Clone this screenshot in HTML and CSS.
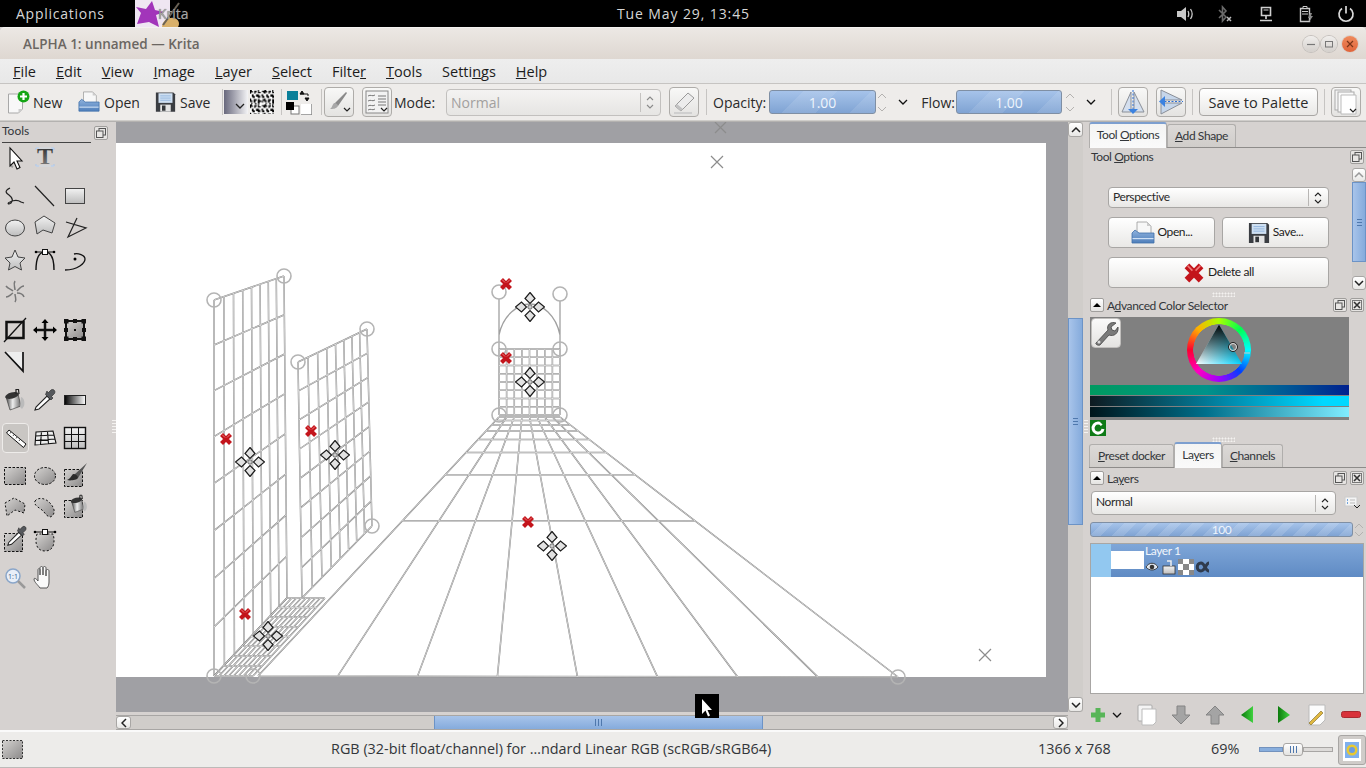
FILE: index.html
```html
<!DOCTYPE html>
<html lang="en">
<head>
    <meta charset="UTF-8">
    <title>ALPHA 1: unnamed — Krita</title>
    <link rel="stylesheet" href="styles.css">
</head>
<body>
    <!-- shared gradients and icons -->
    <svg class="defs" xmlns="http://www.w3.org/2000/svg">
        <defs>
            <linearGradient id="g-shape" x1="0" y1="0" x2="0" y2="1"><stop offset="0" stop-color="#f2f2f2"/><stop offset="1" stop-color="#bdbdbd"/></linearGradient>
            <linearGradient id="g-select" x1="0" y1="0" x2="1" y2="1"><stop offset="0" stop-color="#d4d2d0"/><stop offset="1" stop-color="#8c8a8a"/></linearGradient>
            <linearGradient id="g-black" x1="0" y1="0" x2="1" y2="0"><stop offset="0" stop-color="#000"/><stop offset="1" stop-color="#fff"/></linearGradient>
            <linearGradient id="g-metal" x1="0" y1="0" x2="1" y2="0"><stop offset="0" stop-color="#444"/><stop offset=".45" stop-color="#eee"/><stop offset="1" stop-color="#666"/></linearGradient>
            <linearGradient id="g-blue" x1="0" y1="0" x2="0" y2="1"><stop offset="0" stop-color="#8fb2dd"/><stop offset="1" stop-color="#4f7fbb"/></linearGradient>
            <linearGradient id="g-green" x1="0" y1="0" x2="1" y2="0"><stop offset="0" stop-color="#0c7a0c"/><stop offset="1" stop-color="#3fd23f"/></linearGradient>
            <linearGradient id="g-t" x1="0" y1="0" x2="0" y2="1"><stop offset="0" stop-color="#222"/><stop offset="1" stop-color="#888"/></linearGradient>
            <linearGradient id="g-tri-a" x1="0" y1="1" x2="1" y2="1"><stop offset="0" stop-color="#fff"/><stop offset="1" stop-color="#00d4ff"/></linearGradient>
            <linearGradient id="g-tri-b" x1="0" y1="0" x2="0" y2="1"><stop offset="0" stop-color="#000"/><stop offset="1" stop-color="#000" stop-opacity="0"/></linearGradient>
            <pattern id="p-noise" width="24" height="24" patternUnits="userSpaceOnUse" patternTransform="scale(.6)">
                <rect width="24" height="24" fill="#fff"/>
                <path d="M0 0h3v2h2v2H2v2H0zM7 1h4v3H9v2H7zM13 0h2v3h3v2h-5zM20 1h4v4h-2V3h-2zM3 7h3v3h2v3H4v-2H3zM10 7h5v2h2v4h-4v-2h-3zM19 7h3v3h2v3h-4v-3h-1zM0 14h2v3h2v3H0zM6 15h5v3H9v3H6zM13 15h3v2h3v3h-3v3h-3zM21 15h3v3h-2v3h-2v-3h1zM2 21h2v3H2zM8 22h3v2H8z" fill="#000"/>
            </pattern>
            <symbol id="i-open" viewBox="0 0 24 24">
                <path d="M6 1h10l4 4v9H6z" fill="#f7f7f7" stroke="#9a9a9a" stroke-width=".8"/>
                <path d="M16 1v4h4z" fill="#ccc"/>
                <path d="M1 12l3-3 4 3h15v10H1z" fill="url(#g-blue)" stroke="#3f6fa8" stroke-width=".8"/>
                <rect x="1.5" y="17" width="21" height="1.2" fill="#cfe0f5"/>
            </symbol>
            <symbol id="i-save" viewBox="0 0 24 24">
                <path d="M1 1h20l2 2v20H1z" fill="#3a3d42"/>
                <rect x="4" y="2" width="16" height="11" fill="#cfe0f2"/>
                <path d="M6 5h12M6 7.5h12M6 10h12" stroke="#8fb2dd"/>
                <rect x="6" y="15" width="12" height="8" fill="#e4e4e4"/>
                <rect x="8" y="16" width="4" height="6" fill="#33363a"/>
            </symbol>
            <symbol id="i-float" viewBox="0 0 14 14">
                <rect x="5" y="2.5" width="6.5" height="6.5" fill="none" stroke="#555"/>
                <rect x="2.5" y="5" width="6.5" height="6.5" fill="#e8e6e4" stroke="#555"/>
            </symbol>
            <symbol id="i-close" viewBox="0 0 14 14">
                <rect x="2.5" y="2.5" width="9" height="9" fill="#e8e6e4" stroke="#777"/>
                <path d="M4 4l6 6M10 4l-6 6" stroke="#333" stroke-width="1.6"/>
            </symbol>
            <symbol id="i-collapse" viewBox="0 0 14 14">
                <path d="M3 9l4-4 4 4z" fill="#000"/>
            </symbol>
            <symbol id="i-bucket" viewBox="0 0 24 24">
                <path d="M3 9l12-3 3 12-11 4z" fill="url(#g-metal)" stroke="#333" stroke-width=".6"/>
                <ellipse cx="9" cy="7.5" rx="7" ry="3" fill="#333" transform="rotate(-14 9 7.5)"/>
                <path d="M13 6V1.5h2.5L16 6" fill="none" stroke="#222" stroke-width="1.2"/>
                <path d="M18 9c3 1 4 5 3 9l-2 3-2-2z" fill="#bbb"/>
            </symbol>
            <symbol id="i-dropper" viewBox="0 0 24 24">
                <path d="M2 22l1-3L14 8l3 3L6 21z" fill="#fff" stroke="#222" stroke-width="1.1"/>
                <path d="M12.5 6.5l5.5 5.5 2-2-1.5-1.5 3-3c1.5-3-1.5-5-3.5-3.5l-3 3L14 3z" fill="#55585c" stroke="#222" stroke-width=".6"/>
            </symbol>
            <symbol id="i-brush" viewBox="0 0 24 24">
                <path d="M10 13L23 1l-9 15z" fill="#555"/>
                <path d="M9 12c3 0 5 2 5 4-1 2-8 3-11 2 3-1 4-4 6-6z" fill="#2b2b2b"/>
            </symbol>
            <symbol id="i-move" viewBox="-15 -15 30 30">
                <g fill="#e2e2e2" stroke="#1c1c1c" stroke-width="1.2">
                    <path d="M0-14.5l5 6L0-3.5l-5-5z"/>
                    <path d="M0 14.5l5-6L0 3.5l-5 5z"/>
                    <path d="M-14.5 0l6-5 5 5-5 5z"/>
                    <path d="M14.5 0l-6-5-5 5 5 5z"/>
                    <circle r="2.2" fill="#ccc" stroke="#555" stroke-width=".8"/>
                </g>
            </symbol>
            <symbol id="i-del" viewBox="-7 -7 14 14">
                <path d="M-4.5-4.5l9 9M4.5-4.5l-9 9" stroke="#c3141b" stroke-width="4.2"/>
                <path d="M-4-4.5l3 3M4-4.5l-3 3" stroke="#ef7a7a" stroke-width="1"/>
            </symbol>
        </defs>
    </svg>

    <div class="topbar">
        <span class="apps-label">Applications</span>
        <div class="task-item">
            <svg class="task-icon" viewBox="0 0 45 27" xmlns="http://www.w3.org/2000/svg">
                <rect width="35" height="27" fill="#efe6f2"/>
                <path d="M2 24l4-11-5-6 10 2L17 1l3 9 9 2-8 3 3 12-10-5z" fill="#a235ba"/>
                <path d="M27 27c0-6 6-10 12-9 5 1 6 6 4 9z" fill="#d9b06a"/>
                <path d="M28 25L44 3" stroke="#6a6256" stroke-width="2"/>
            </svg>
            <span class="task-label">Krita</span>
        </div>
        <span class="clock">Tue May 29, 13:45</span>
        <div class="tray">
            <svg class="tray-icon" viewBox="0 0 18 18"><path d="M1 6h4l5-4v14l-5-4H1z" fill="#c8c8c8"/><path d="M12 6c1 2 1 4 0 6M14.5 4c2 3 2 7 0 10" fill="none" stroke="#c8c8c8" stroke-width="1.3"/></svg>
            <svg class="tray-icon" viewBox="0 0 18 18"><path d="M3 5l7 7-3.5 4V2L10 6l-7 7" fill="none" stroke="#6a6a6a" stroke-width="1.6"/><path d="M11 12l4 4M15 12l-4 4" stroke="#bdbdbd" stroke-width="1.5"/></svg>
            <svg class="tray-icon" viewBox="0 0 18 18"><path d="M4.5 2.5h9v8h-9z" fill="none" stroke="#d0d0d0" stroke-width="1.6"/><path d="M6.5 5h5" stroke="#d0d0d0"/><path d="M9 11v3M3 15.5h12" stroke="#d0d0d0" stroke-width="1.7"/></svg>
            <svg class="tray-icon" viewBox="0 0 18 18"><path d="M3.5 3.5h9v13h-9z" fill="none" stroke="#c8c8c8" stroke-width="1.4"/><path d="M6 1.5h4v2H6zM5 6.5h6M5 9h6" stroke="#c8c8c8"/><path d="M13 8l-2 5h2l-1 4 4-6h-2l1-3z" fill="#8a8a8a"/></svg>
            <svg class="tray-icon" viewBox="0 0 18 18"><path d="M5 3.5a7 7 0 1 0 8 0" fill="none" stroke="#d8d8d8" stroke-width="1.7"/><path d="M9 1v7.5" stroke="#d8d8d8" stroke-width="1.7"/></svg>
        </div>
    </div>

    <div class="titlebar">
        <span class="title-text">ALPHA 1: unnamed — Krita</span>
        <div class="wm-buttons">
            <span class="wm-btn"><svg viewBox="0 0 16 16" width="16" height="16"><path d="M4 8.5h8" stroke="#777" stroke-width="1.2"/></svg></span>
            <span class="wm-btn"><svg viewBox="0 0 16 16" width="16" height="16"><rect x="4.5" y="5.5" width="7" height="5.5" fill="none" stroke="#777"/></svg></span>
            <span class="wm-btn wm-close"><svg viewBox="0 0 16 16" width="16" height="16"><path d="M5 5l6 6M11 5l-6 6" stroke="#7a3418" stroke-width="1.2"/></svg></span>
        </div>
    </div>

    <div class="menubar">
        <span class="menu-item"><u>F</u>ile</span>
        <span class="menu-item"><u>E</u>dit</span>
        <span class="menu-item"><u>V</u>iew</span>
        <span class="menu-item"><u>I</u>mage</span>
        <span class="menu-item"><u>L</u>ayer</span>
        <span class="menu-item"><u>S</u>elect</span>
        <span class="menu-item">Filte<u>r</u></span>
        <span class="menu-item"><u>T</u>ools</span>
        <span class="menu-item">Setti<u>n</u>gs</span>
        <span class="menu-item"><u>H</u>elp</span>
    </div>

    <div class="toolbar">
        <div class="tb-action tb-action-new">
            <svg width="22" height="24" viewBox="0 0 22 24"><path d="M0.5 4h14v15l-4 4h-10z" fill="#f8f8f8" stroke="#a8a8a8"/><path d="M14.5 19h-4v4z" fill="#ccc"/><circle cx="15.5" cy="6.5" r="6" fill="#14a514"/><path d="M15.5 3v7M12 6.5h7" stroke="#fff" stroke-width="2.2"/></svg>
            <span>New</span>
        </div>
        <div class="tb-action"><svg width="22" height="24"><use href="#i-open"/></svg><span>Open</span></div>
        <div class="tb-action"><svg width="21" height="24" viewBox="0 0 24 24"><use href="#i-save"/></svg><span>Save</span></div>
        <i class="tb-sep"></i>
        <div class="gradient-box"><svg width="10" height="6" viewBox="0 0 10 6"><path d="M1 1l4 4 4-4" fill="none" stroke="#222" stroke-width="1.3"/></svg></div>
        <svg class="pattern-box" width="24" height="24"><rect width="24" height="24" fill="url(#p-noise)"/></svg>
        <i class="tb-sep"></i>
        <svg class="fg-bg" width="26" height="26" viewBox="0 0 26 26">
            <rect x="1" y="2" width="11" height="9" fill="#0a7f99"/>
            <path d="M14 5h4l-2-3zM14 5h8M22 7v-2M19 9h4l-2 3z" fill="#111" stroke="#111"/>
            <rect x="5" y="17" width="8" height="8" fill="#fff" stroke="#777"/>
            <rect x="0" y="13" width="8" height="8" fill="#000"/>
            <rect x="15" y="15" width="11" height="11" fill="#fff"/>
            <path d="M26 15v11H15" fill="none" stroke="#888" stroke-width="1.5"/>
        </svg>
        <i class="tb-sep"></i>
        <div class="tb-btn"><svg width="26" height="26" viewBox="0 0 26 26"><path d="M8 15L20 3l1 1-9 13z" fill="#8a8a8a"/><path d="M8 14c3 0 4 2 4 3-2 3-5 3-8 3 2-1 2-4 4-6z" fill="#a8a8a8"/><path d="M18 19l3 3 3-3" fill="none" stroke="#222" stroke-width="1.2"/></svg></div>
        <div class="tb-btn"><svg width="26" height="26" viewBox="0 0 26 26"><rect x="2" y="2" width="22" height="22" fill="#f2f2f2" stroke="#888"/><path d="M4 7c3-2 4 1 7-1M4 12c3-2 4 1 7-1M4 17c3-2 4 1 7-1M4 21c3-2 4 1 7-1M14 7h8M14 10h8M14 13h8M14 16h8" fill="none" stroke="#777"/><path d="M17 19l3 3 3-3" fill="none" stroke="#222" stroke-width="1.2"/></svg></div>
        <span class="tb-label">Mode:</span>
        <div class="combo combo-disabled"><span>Normal</span><svg width="20" height="25" viewBox="0 0 20 25"><path d="M0.5 3v19" stroke="#c4c2c0"/><path d="M7 10l3-3 3 3M7 15l3 3 3-3" fill="none" stroke="#8a8a8a" stroke-width="1.1"/></svg></div>
        <div class="tb-btn"><svg width="26" height="26" viewBox="0 0 26 26"><path d="M4 17L17 4l6 5-13 13z" fill="#ececec" stroke="#999"/><path d="M4 17l6 5 2-2-6-5z" fill="#c2c2c2"/><path d="M3 24h18" stroke="#cfcfcf" stroke-width="2"/></svg></div>
        <i class="tb-sep"></i>
        <span class="tb-label">Opacity:</span>
        <div class="spin-slider">1.00</div>
        <svg class="spin-arrows" width="12" height="24" viewBox="0 0 12 24"><path d="M2 8l4-4 4 4M2 17l4 4 4-4" fill="none" stroke="#b4b2b0"/></svg>
        <svg class="chevron" width="10" height="6" viewBox="0 0 10 6"><path d="M1 1l4 4 4-4" fill="none" stroke="#111" stroke-width="1.3"/></svg>
        <span class="tb-label tb-label-right">Flow:</span>
        <div class="spin-slider">1.00</div>
        <svg class="spin-arrows" width="12" height="24" viewBox="0 0 12 24"><path d="M2 8l4-4 4 4M2 17l4 4 4-4" fill="none" stroke="#b4b2b0"/></svg>
        <svg class="chevron" width="10" height="6" viewBox="0 0 10 6"><path d="M1 1l4 4 4-4" fill="none" stroke="#111" stroke-width="1.3"/></svg>
        <i class="tb-sep"></i>
        <div class="tb-btn"><svg width="28" height="28" viewBox="0 0 28 28"><path d="M12 4L3 24h9zM15 4l10 20H15z" fill="#d4dfee" stroke="#8a8f98"/><path d="M14 2v22" stroke="#2a6fd6" stroke-dasharray="2 1.5"/><path d="M9 21h10l-5 5z" fill="#3b82e0"/></svg></div>
        <div class="tb-btn"><svg width="28" height="28" viewBox="0 0 28 28"><path d="M4 2l21 10H4zM4 15h21L4 26z" fill="#c6d6ea" stroke="#8a8f98"/><path d="M4 13.5h22" stroke="#2a6fd6" stroke-dasharray="2 1.5"/><path d="M8 8v11l-6-5.5z" fill="#3b82e0"/></svg></div>
        <i class="tb-sep"></i>
        <div class="palette-btn">Save to Palette</div>
        <i class="tb-sep"></i>
        <div class="tb-btn"><svg width="26" height="26" viewBox="0 0 26 26"><rect x="2" y="1" width="16" height="20" fill="#f4f4f4" stroke="#aaa"/><rect x="5" y="3" width="16" height="20" fill="#fafafa" stroke="#aaa"/><path d="M8 6h15v19H8z" fill="#fff" stroke="#bbb"/><path d="M17 20l3 3 3-3" fill="none" stroke="#222" stroke-width="1.2"/></svg></div>
    </div>

    <div class="workspace">
        <div class="toolbox">
            <div class="toolbox-head">
                <span class="toolbox-title">Tools</span>
                <span class="dock-btn"><svg width="14" height="14"><use href="#i-float"/></svg></span>
            </div>
            <div class="tool-group tool-group-first">
                <svg class="tool" viewBox="0 0 30 32"><path d="M11 8v17l2 1" fill="none" stroke="#999" stroke-width="2"/><path d="M10 7v18l4-4 3 7 3-1.5-3-6.5h5z" fill="#fff" stroke="#111" stroke-width="1.1"/></svg>
                <svg class="tool" viewBox="0 0 30 32"><path d="M6 9V7h3M21 7h3v2M6 23v2h3M21 25h3v-2" fill="none" stroke="#a9c6ee"/><path d="M6 7h18M6 25h18" stroke="#cfe0f5" stroke-width=".5"/><text class="tool-t" x="15" y="23" text-anchor="middle">T</text></svg>
            </div>
            <div class="tool-group">
                <svg class="tool" viewBox="0 0 30 32"><path d="M10 8C4 11 6 13 9 15c4 3 4 6 2 8-3 2-4 0-1-1 4-2 8-2 11 0l3 1" fill="none" stroke="#222" stroke-width="1.3"/></svg>
                <svg class="tool" viewBox="0 0 30 32"><path d="M5 6l19 20" stroke="#222" stroke-width="1.2"/></svg>
                <svg class="tool" viewBox="0 0 30 32"><rect x="5.5" y="8.5" width="19" height="15" fill="url(#g-shape)" stroke="#444"/></svg>
                <svg class="tool" viewBox="0 0 30 32"><ellipse cx="15" cy="16" rx="9.5" ry="8" fill="url(#g-shape)" stroke="#444"/></svg>
                <svg class="tool" viewBox="0 0 30 32"><path d="M5 10l9-6 11 7-3 10-9-3-6 4z" fill="url(#g-shape)" stroke="#444"/></svg>
                <svg class="tool" viewBox="0 0 30 32"><path d="M17 6L8 25l18-9L6 10" fill="none" stroke="#222" stroke-width="1.2"/></svg>
                <svg class="tool" viewBox="0 0 30 32"><path d="M15 6l3 7 7 1-5 5 1.5 7-6.5-3.5L8.5 26 10 19l-5-5 7-1z" fill="url(#g-shape)" stroke="#444"/></svg>
                <svg class="tool" viewBox="0 0 30 32"><path d="M6 26C6 14 9 8 15 8s9 6 9 18" fill="none" stroke="#111" stroke-width="1.4"/><path d="M6 8h18" stroke="#111"/><rect x="12.5" y="5.5" width="5" height="5" fill="#fff" stroke="#111"/><circle cx="6" cy="8" r="1.3"/><circle cx="24" cy="8" r="1.3"/></svg>
                <svg class="tool" viewBox="0 0 30 32"><path d="M5 26c13 0 20-7 20-11 0-4-7-6-11-5" fill="none" stroke="#111" stroke-width="1.3"/><circle cx="15" cy="15" r="1.5"/></svg>
                <svg class="tool" viewBox="0 0 30 32"><path d="M15 14c0-3-2-6 0-9M17 15c2-2 4-5 7-5M17 17c3 0 6 1 7 4M15 18c0 3 2 5 0 8M13 17c-3 2-4 4-7 4M13 15c-2-2-5-2-7-5" fill="none" stroke="#777" stroke-width="1.5"/></svg>
            </div>
            <div class="tool-group">
                <svg class="tool" viewBox="0 0 30 32"><rect x="6.5" y="8" width="17" height="16" fill="none" stroke="#111" stroke-width="2.5"/><path d="M4 28L26 4" stroke="#111" stroke-width="1.3"/></svg>
                <svg class="tool" viewBox="0 0 30 32"><path d="M15 7v18M5 16h20" stroke="#111" stroke-width="2.5"/><path d="M15 5l-3.5 4h7zM15 27l-3.500-4h7zM3 16l4-3.500v7zM27 16l-4-3.500v7z"/></svg>
                <svg class="tool" viewBox="0 0 30 32"><rect x="6" y="7" width="18" height="18" fill="url(#g-select)" stroke="#111" stroke-width="2"/><g fill="#111"><rect x="4" y="5" width="4.5" height="4.5"/><rect x="21.5" y="5" width="4.5" height="4.5"/><rect x="4" y="22.5" width="4.5" height="4.5"/><rect x="21.5" y="22.5" width="4.5" height="4.5"/><rect x="13" y="5" width="4" height="4"/><rect x="13" y="23" width="4" height="4"/><rect x="4" y="14" width="4" height="4"/><rect x="22" y="14" width="4" height="4"/><rect x="14" y="15" width="2" height="2"/></g></svg>
                <svg class="tool" viewBox="0 0 30 32"><path d="M5 6l18 19V6" fill="#eee" stroke="#111" stroke-width="1.7"/></svg>
            </div>
            <div class="tool-group">
                <svg class="tool" viewBox="-3 -4 30 32"><use href="#i-bucket" width="24" height="24"/></svg>
                <svg class="tool" viewBox="-3 -4 30 32"><use href="#i-dropper" width="24" height="24"/></svg>
                <svg class="tool" viewBox="0 0 30 32"><rect x="4.5" y="11.5" width="21" height="9" fill="url(#g-black)" stroke="#222"/></svg>
            </div>
            <div class="tool-group">
                <div class="tool tool-active"><svg width="26" height="28" viewBox="0 0 26 28"><path d="M6 6l17 14-2.5 3.5L3.5 9z" fill="#fff" stroke="#111"/><path d="M8 8l-1 1.5M11 10.500l-1 1.5M14 13l-1 1.5M17 15.500l-1 1.5" stroke="#555"/></svg></div>
                <svg class="tool" viewBox="0 0 30 32"><path d="M6 10l17-1 3 12-21 2zM11.5 9.5l-1 13M17.500 9.500l1 12.500M5.500 14l18.500-1M5 18.500l20-1.500" fill="#eee" stroke="#111" stroke-width="1.1"/></svg>
                <svg class="tool" viewBox="0 0 30 32"><rect x="4.5" y="5.5" width="21" height="21" fill="url(#g-shape)" stroke="#111" stroke-width="1.4"/><path d="M11.5 5.5v21M18.5 5.5v21M4.5 12.5h21M4.5 19.5h21" stroke="#111"/></svg>
            </div>
            <div class="tool-group">
                <svg class="tool" viewBox="0 0 30 32"><rect x="4.5" y="7.5" width="21" height="17" fill="url(#g-select)" stroke="#111" stroke-dasharray="2.5 1.5"/></svg>
                <svg class="tool" viewBox="0 0 30 32"><ellipse cx="15" cy="16" rx="10.5" ry="8.5" fill="url(#g-select)" stroke="#111" stroke-dasharray="2.5 1.5"/></svg>
                <svg class="tool" viewBox="0 0 30 32"><rect x="4.5" y="9.5" width="18" height="17" fill="url(#g-select)" stroke="#111" stroke-dasharray="2.5 1.5"/><use href="#i-brush" x="4" y="2" width="24" height="24"/></svg>
                <svg class="tool" viewBox="0 0 30 32"><path d="M5 11l9-5 11 6-1 9-9-3-8 6z" fill="url(#g-select)" stroke="#111" stroke-dasharray="2 2"/></svg>
                <svg class="tool" viewBox="0 0 30 32"><path d="M5 9c3-4 10-3 14 1s7 9 4 13-6 1-9-3-11-6-9-11z" fill="url(#g-select)" stroke="#111" stroke-dasharray="2 2"/></svg>
                <svg class="tool" viewBox="0 0 30 32"><rect x="4.5" y="8.5" width="18" height="17" fill="url(#g-select)" stroke="#111" stroke-dasharray="2.5 1.5"/><use href="#i-bucket" x="9" y="2" width="20" height="20"/></svg>
                <svg class="tool" viewBox="0 0 30 32"><rect x="4.5" y="9.5" width="18" height="18" fill="url(#g-select)" stroke="#111" stroke-dasharray="2.5 1.5"/><use href="#i-dropper" x="6" y="1" width="22" height="22"/></svg>
                <svg class="tool" viewBox="0 0 30 32"><path d="M7 10c-2 6-2 17 8 17s10-11 8-17z" fill="url(#g-select)" stroke="#111" stroke-dasharray="2 2"/><path d="M5 8h20" stroke="#111"/><rect x="12.5" y="5.5" width="5" height="5" fill="#fff" stroke="#111"/><circle cx="5" cy="8" r="1.3"/><circle cx="25" cy="8" r="1.3"/></svg>
            </div>
            <div class="tool-group">
                <svg class="tool" viewBox="0 0 30 32"><circle cx="13" cy="14" r="7" fill="#e8eff8" stroke="#8aa6c9" stroke-width="1.5"/><path d="M18 19l7 7" stroke="#999" stroke-width="2.5"/><text class="tool-zoom" x="13" y="17" text-anchor="middle">1:1</text></svg>
                <svg class="tool" viewBox="0 0 30 32"><path d="M10 26c-2-3-6-6-6-9 0-1 2-1 4 2V8c0-2 2-2 2 0v5V6c0-2 3-2 3 0v7V6c0-2 3-2 3 0v8-5c0-2 3-2 3 0v11c0 3-1 5-2 6z" fill="#fafafa" stroke="#555"/></svg>
            </div>
        </div>
        <div class="splitter"><i class="dots dots-v"></i></div>

        <div class="center">
            <div class="center-top">
                <svg id="canvas" class="canvas" viewBox="116 122 952 590" xmlns="http://www.w3.org/2000/svg">
                    <rect x="116" y="143" width="930" height="534" fill="#fff"/>
                    <g id="grids"></g>
                    <path class="assist-line" d="M499 349V335C503 315 518 304 530 304S556 315 560 335V349M499 349V299M560 349V301"/>
                    <g class="assist-ring">
                        <circle cx="214" cy="300" r="7"/><circle cx="284" cy="276" r="7"/>
                        <circle cx="298" cy="362" r="7"/><circle cx="367" cy="329" r="7"/>
                        <circle cx="372" cy="526" r="7"/>
                        <circle cx="214" cy="676" r="7"/><circle cx="253" cy="676" r="7"/>
                        <circle cx="898" cy="677" r="7"/>
                        <circle cx="499" cy="292" r="7"/><circle cx="560" cy="294" r="7"/>
                        <circle cx="499" cy="349" r="7"/><circle cx="560" cy="349" r="7"/>
                        <circle cx="499" cy="415" r="7"/><circle cx="560" cy="415" r="7"/>
                    </g>
                    <path class="assist-x" d="M715 122l11 11M726 122l-11 11M711 156l12 12M723 156l-12 12M979 649l12 12M991 649l-12 12"/>
                    <use href="#i-move" x="515" y="292" width="30" height="30"/>
                    <use href="#i-move" x="515" y="367" width="30" height="30"/>
                    <use href="#i-move" x="235" y="447" width="30" height="30"/>
                    <use href="#i-move" x="320" y="440" width="30" height="30"/>
                    <use href="#i-move" x="253" y="621" width="30" height="30"/>
                    <use href="#i-move" x="537" y="531" width="30" height="30"/>
                    <use href="#i-del" x="499" y="277" width="14" height="14"/>
                    <use href="#i-del" x="499" y="351" width="14" height="14"/>
                    <use href="#i-del" x="219" y="432" width="14" height="14"/>
                    <use href="#i-del" x="304" y="424" width="14" height="14"/>
                    <use href="#i-del" x="238" y="607" width="14" height="14"/>
                    <use href="#i-del" x="521" y="515" width="14" height="14"/>
                </svg>
                <div class="vscroll">
                    <span class="scroll-btn"><svg width="10" height="6" viewBox="0 0 10 6"><path d="M1 5l4-4 4 4" fill="none" stroke="#222" stroke-width="1.5"/></svg></span>
                    <div class="vscroll-track"><div class="vscroll-thumb"><i class="grip-h"></i></div></div>
                    <span class="scroll-btn"><svg width="10" height="6" viewBox="0 0 10 6"><path d="M1 1l4 4 4-4" fill="none" stroke="#222" stroke-width="1.5"/></svg></span>
                </div>
            </div>
            <div class="hscroll">
                <span class="scroll-btn scroll-btn-h"><svg width="6" height="10" viewBox="0 0 6 10"><path d="M5 1L1 5l4 4" fill="none" stroke="#222" stroke-width="1.5"/></svg></span>
                <div class="hscroll-track"><div class="hscroll-thumb"><i class="grip-v"></i></div></div>
                <span class="scroll-btn scroll-btn-h"><svg width="6" height="10" viewBox="0 0 6 10"><path d="M1 1l4 4-4 4" fill="none" stroke="#222" stroke-width="1.5"/></svg></span>
            </div>
        </div>
        <div class="splitter splitter-right"><i class="dots dots-v"></i></div>

        <div class="docks">
            <div class="dock-tabs">
                <span class="dock-tab active tab-tool"><span>Tool <u>O</u>ptions</span></span>
                <span class="dock-tab tab-shape"><span><u>A</u>dd Shape</span></span>
            </div>
            <div class="dock-head dock-head-first">
                <span class="dock-title">Tool <u>O</u>ptions</span>
                <span class="dock-btn"><svg width="14" height="14"><use href="#i-float"/></svg></span>
            </div>
            <div class="options-row">
                <div class="options-body">
                    <div class="combo combo-small"><span>Perspective</span><svg width="20" height="21" viewBox="0 0 20 21"><path d="M0.5 2v17" stroke="#b8b6b4"/><path d="M7 9l3-3 3 3M7 13l3 3 3-3" fill="none" stroke="#222" stroke-width="1.1"/></svg></div>
                    <div class="option-buttons">
                        <div class="option-btn"><svg width="24" height="24"><use href="#i-open"/></svg><span>Open...</span></div>
                        <div class="option-btn"><svg width="22" height="22" viewBox="0 0 24 24"><use href="#i-save"/></svg><span>Save...</span></div>
                    </div>
                    <div class="option-btn option-delete"><svg width="22" height="22" viewBox="-7 -7 14 14"><use href="#i-del" x="-7" y="-7" width="14" height="14"/></svg><span>Delete all</span></div>
                </div>
                <div class="mini-scroll">
                    <span class="scroll-btn"><svg width="10" height="6" viewBox="0 0 10 6"><path d="M1 5l4-4 4 4" fill="none" stroke="#999" stroke-width="1.5"/></svg></span>
                    <div class="mini-track"><div class="mini-thumb"><i class="grip-h"></i></div></div>
                    <span class="scroll-btn"><svg width="10" height="6" viewBox="0 0 10 6"><path d="M1 1l4 4 4-4" fill="none" stroke="#222" stroke-width="1.5"/></svg></span>
                </div>
            </div>
            <div class="dock-split"><i class="dots dots-h"></i></div>
            <div class="dock-head dock-head-collapsible">
                <span class="dock-btn dock-btn-collapse"><svg width="14" height="14"><use href="#i-collapse"/></svg></span>
                <span class="dock-title">A<u>d</u>vanced Color Selector</span>
                <span class="dock-btn dock-btn-end"><svg width="14" height="14"><use href="#i-float"/></svg></span>
                <span class="dock-btn"><svg width="14" height="14"><use href="#i-close"/></svg></span>
            </div>
            <div class="selector">
                <div class="selector-top">
                    <div class="selector-settings">
                        <svg width="26" height="26" viewBox="0 0 26 26"><path d="M3 23L15 10c-2-5 3-9 8-7l-5 4 1 3 3 1 3-4c1 6-4 10-9 8L7 25c-2 1-5-1-4-2z" fill="#7a7a7a" stroke="#444" stroke-width=".8"/><circle cx="6" cy="22" r="1.5" fill="#ddd"/></svg>
                    </div>
                    <div class="color-wheel">
                        <svg width="64" height="64" viewBox="0 0 64 64">
                            <path d="M32 6.5L55 46H9z" fill="url(#g-tri-a)"/>
                            <path d="M32 6.5L55 46H9z" fill="url(#g-tri-b)"/>
                            <circle cx="46" cy="29" r="4.5" fill="none" stroke="#222" stroke-width="1"/>
                            <circle cx="46" cy="29" r="3.5" fill="none" stroke="#ddd" stroke-width="1"/>
                            <path d="M57 35h6" stroke="#ccc"/>
                        </svg>
                    </div>
                </div>
                <div class="strip strip-1"></div>
                <div class="strip strip-2"></div>
                <div class="strip strip-3"></div>
            </div>
            <div class="selector-refresh">
                <svg width="16" height="16" viewBox="0 0 16 16"><rect width="16" height="16" fill="#0e7a16"/><path d="M12 5a5 5 0 1 0 1 4" fill="none" stroke="#fff" stroke-width="3"/><path d="M10 2h5v5z" fill="#0e7a16"/></svg>
            </div>
            <div class="dock-split dock-split-low"><i class="dots dots-h"></i></div>
            <div class="dock-tabs dock-tabs-low">
                <span class="dock-tab tab-preset"><span><u>P</u>reset docker</span></span>
                <span class="dock-tab active tab-layers"><span>La<u>y</u>ers</span></span>
                <span class="dock-tab tab-channels"><span><u>C</u>hannels</span></span>
            </div>
            <div class="dock-head dock-head-collapsible dock-head-layers">
                <span class="dock-btn dock-btn-collapse"><svg width="14" height="14"><use href="#i-collapse"/></svg></span>
                <span class="dock-title">La<u>y</u>ers</span>
                <span class="dock-btn dock-btn-end"><svg width="14" height="14"><use href="#i-float"/></svg></span>
                <span class="dock-btn"><svg width="14" height="14"><use href="#i-close"/></svg></span>
            </div>
            <div class="layer-mode">
                <div class="combo combo-layer"><span>Normal</span><svg width="20" height="23" viewBox="0 0 20 23"><path d="M0.5 3v17" stroke="#b8b6b4"/><path d="M7 10l3-3 3 3M7 14l3 3 3-3" fill="none" stroke="#222" stroke-width="1.1"/></svg></div>
                <svg width="17" height="14" viewBox="0 0 17 14"><rect x="1" y="1" width="12" height="9" fill="#f4f4f4" stroke="#ccc"/><path d="M3 4h1M3 7h1" stroke="#4a8ad4" stroke-width="1.4"/><path d="M6 4h5M6 7h5" stroke="#bbb"/><path d="M10 9l3 3 3-3" fill="none" stroke="#222"/></svg>
            </div>
            <div class="layer-opacity">
                <div class="spin-slider spin-slider-dense">100</div>
                <svg width="10" height="14" viewBox="0 0 10 14"><path d="M1 5l4-4 4 4M1 9l4 4 4-4" fill="none" stroke="#b4b2b0"/></svg>
            </div>
            <div class="layer-list">
                <div class="layer-row">
                    <i class="layer-color"></i>
                    <i class="layer-thumb"></i>
                    <div class="layer-info">
                        <span class="layer-name">Layer 1</span>
                        <div class="layer-flags">
                            <svg width="14" height="12" viewBox="0 0 14 12"><path d="M1 6c3-5 9-5 12 0-3 4-9 4-12 0z" fill="#dfe6ef" stroke="#333" stroke-width=".9"/><circle cx="7" cy="6" r="2.3" fill="#333"/></svg>
                            <svg class="flag-lock" width="14" height="16" viewBox="0 0 14 16"><rect x="1" y="7" width="12" height="8" fill="url(#g-shape)" stroke="#333" stroke-width=".8"/><path d="M9 7V2H5" fill="none" stroke="#eee" stroke-width="1.5"/></svg>
                            <svg width="16" height="16" viewBox="0 0 16 16"><rect width="16" height="16" fill="#fff"/><path d="M0 0h5v5H0zM11 0h5v5h-5zM5 5h6v6H5zM0 11h5v5H0zM11 11h5v5h-5z" fill="#888"/></svg>
                            <svg width="16" height="12" viewBox="0 0 16 12"><path d="M15 2c-3 0-4 8-8 8-5 0-5-8 0-8 4 0 4 8 8 8" fill="none" stroke="#2f3b4d" stroke-width="3"/></svg>
                        </div>
                    </div>
                </div>
            </div>
            <div class="layer-footer">
                <svg class="layer-tool" width="16" height="16" viewBox="0 0 16 16"><path d="M5.5 1h5v4.5H15v5h-4.5V15h-5v-4.500H1v-5h4.500z" fill="#58b558"/></svg>
                <svg class="layer-tool" width="10" height="6" viewBox="0 0 10 6"><path d="M1 1l4 4 4-4" fill="none" stroke="#111" stroke-width="1.3"/></svg>
                <svg class="layer-tool" width="20" height="22" viewBox="0 0 20 22"><rect x="1" y="1" width="14" height="16" rx="1" fill="#f4f4f4" stroke="#aaa"/><path d="M5 5h14v13l-3 3H5z" fill="#fff" stroke="#bbb"/></svg>
                <svg class="layer-tool" width="20" height="20" viewBox="0 0 20 20"><path d="M6 1h8v9h5l-9 9-9-9h5z" fill="#a4a4a4" stroke="#848484"/></svg>
                <svg class="layer-tool" width="20" height="20" viewBox="0 0 20 20"><path d="M6 19h8v-9h5L10 1l-9 9h5z" fill="#a4a4a4" stroke="#848484"/></svg>
                <svg class="layer-tool" width="20" height="20" viewBox="0 0 20 20"><path d="M14 1v17L2 10z" fill="url(#g-green)"/></svg>
                <svg class="layer-tool" width="20" height="20" viewBox="0 0 20 20"><path d="M5 1v17l12-8z" fill="url(#g-green)"/></svg>
                <svg class="layer-tool" width="20" height="22" viewBox="0 0 20 22"><path d="M3 1h16v15l-5 5H3z" fill="#fcfcfc" stroke="#bbb"/><path d="M3 19L15 7l2 2L5 21z" fill="#e0b840" stroke="#7a6420" stroke-width=".6"/></svg>
                <svg class="layer-minus" width="20" height="8" viewBox="0 0 20 8"><rect x=".5" y=".5" width="19" height="6" rx="2" fill="#d8323a" stroke="#a82a30"/></svg>
            </div>
        </div>
    </div>

    <div class="statusbar">
        <svg class="status-sel" width="21" height="19" viewBox="0 0 21 19"><rect x=".5" y=".5" width="20" height="18" fill="url(#g-select)" stroke="#333" stroke-dasharray="2 1.5"/></svg>
        <span>RGB (32-bit float/channel) for …ndard Linear RGB (scRGB/sRGB64)</span>
        <span>1366 x 768</span>
        <span>69%</span>
        <div class="zoom-slider"><i class="zoom-fill"></i><i class="zoom-handle"><i class="grip-v"></i></i><i class="zoom-rest"></i></div>
        <div class="status-btn"><svg width="18" height="22" viewBox="0 0 18 22"><rect width="18" height="22" fill="#fff"/><rect x="2" y="3" width="14" height="16" fill="#7fb0ee"/><circle cx="9" cy="11" r="5.5" fill="#e8c832"/><circle cx="9" cy="11" r="3" fill="#6a9ce0"/></svg></div>
    </div>

    <!-- recorded mouse pointer -->
    <div class="pointer"><svg width="12" height="20" viewBox="0 0 12 20"><path d="M1 1v15l3.5-3.5 2.5 6 2-1-2.5-5.5H11z" fill="#fff"/></svg></div>

    <script src="grid.js"></script>
</body>
</html>
```

FILE: styles.css
```css
* {
    box-sizing: border-box;
}

html, body {
    margin: 0;
    height: 100%;
}

body {
    position: relative;
    width: 1366px;
    height: 768px;
    overflow: hidden;
    display: flex;
    flex-direction: column;
    font-family: "Open Sans", "Noto Sans", sans-serif;
    font-size: 14px;
    color: #2a2a2a;
    background-color: #d6d2d0;
}

svg {
    display: block;
    flex: none;
}

.defs {
    width: 0;
    height: 0;
}

/* desktop panel */
.topbar {
    height: 27px;
    flex: none;
    display: flex;
    align-items: center;
    background-color: #000;
    color: #d6d6d6;
}

.apps-label {
    width: 135px;
    padding-left: 16px;
    font-size: 14px;
    letter-spacing: 0.75px;
}

.task-item {
    width: 160px;
    height: 27px;
    display: flex;
    align-items: center;
}

.task-icon {
    width: 45px;
    height: 27px;
}

.task-label {
    margin-left: -22px;
    color: #a8a8a8;
    font-size: 14px;
    text-shadow: 0 0 1px #444;
}

.clock {
    width: 455px;
    text-align: right;
    font-size: 14px;
    letter-spacing: 0.9px;
}

.tray {
    margin-left: 426px;
    width: 179px;
    display: flex;
    justify-content: space-between;
}

.tray-icon {
    width: 18px;
    height: 18px;
}

/* window frame */
.titlebar {
    height: 32px;
    flex: none;
    display: flex;
    align-items: center;
    justify-content: space-between;
    padding: 0 8px 0 23px;
    border-top: 1px solid #f4f2f0;
    border-radius: 5px 5px 0 0;
    background: linear-gradient(#ece8e4, #ded7d1);
}

.title-text {
    font-size: 13.5px;
    font-weight: 600;
    color: #6b6662;
}

.wm-buttons {
    display: flex;
    gap: 2px;
}

.wm-btn {
    width: 16px;
    height: 16px;
    border-radius: 50%;
    background: linear-gradient(#f0eeec, #d4d0cc);
    box-shadow: 0 0 0 1px #c4c0bc;
}

.wm-close {
    margin-left: 3px;
    background: linear-gradient(#ef8a5c, #e0643a);
    box-shadow: 0 0 0 1px #d8d2cc;
}

.menubar {
    height: 25px;
    flex: none;
    display: flex;
    align-items: center;
    gap: 20px;
    padding-left: 13px;
    background: linear-gradient(#eeeeee, #e8e8e8);
    border-bottom: 1px solid #c6c4c2;
    color: #1c1c1c;
}

.menu-item {
    font-size: 14.5px;
}

/* main toolbar */
.toolbar {
    height: 37px;
    flex: none;
    display: grid;
    grid-template-columns: 70px 77px 66px 3px 26px 27px 9px 32px 6px 38px 32px 52px 223px 30px 14px 56px 107px 12px 30px 38px 106px 16px 26px 14px 38px 30px 13px 119px 13px 30px;
    align-items: center;
    padding-left: 8px;
    background-color: #eeecea;
    border-bottom: 1px solid #cfcdca;
}

.tb-action {
    display: flex;
    align-items: center;
    gap: 4px;
    font-size: 14px;
}

.tb-action-new {
    gap: 3px;
}

.tb-sep {
    justify-self: center;
    width: 1px;
    height: 26px;
    background-color: #c6c4c2;
}

.gradient-box {
    width: 24px;
    height: 24px;
    display: flex;
    align-items: flex-end;
    justify-content: flex-end;
    padding: 0 3px 5px 0;
    background: linear-gradient(90deg, #68687c, #f4f4f6);
}

.fg-bg {
    justify-self: start;
}

.tb-btn {
    width: 30px;
    height: 30px;
    display: flex;
    align-items: center;
    justify-content: center;
    border: 1px solid #aeaca9;
    border-radius: 4px;
    background: linear-gradient(#f8f8f7, #e4e3e1);
}

.tb-label {
    font-size: 14px;
}

.tb-label-right {
    text-align: right;
    padding-right: 1px;
}

.combo {
    display: flex;
    align-items: center;
    justify-content: space-between;
    border: 1px solid #a8a6a4;
    border-radius: 4px;
    background: linear-gradient(#ffffff, #e8e7e5);
}

.combo span {
    padding-left: 4px;
}

.combo-disabled {
    width: 215px;
    height: 27px;
    color: #a2a09e;
    background: linear-gradient(#f4f3f2, #e6e5e3);
    border-color: #c2c0be;
}

.spin-slider {
    height: 24px;
    display: flex;
    align-items: center;
    justify-content: center;
    border: 1px solid #7f8fa4;
    border-radius: 3px;
    color: #eef4fc;
    font-size: 14px;
    background:
        repeating-linear-gradient(135deg, transparent 0 24px, rgba(255, 255, 255, 0.1) 24px 48px),
        linear-gradient(#a6c3ea, #7fa3d3);
}

.spin-arrows {
    justify-self: center;
}

.chevron {
    justify-self: center;
}

.palette-btn {
    height: 28px;
    display: flex;
    align-items: center;
    justify-content: center;
    border: 1px solid #a8a6a4;
    border-radius: 4px;
    font-size: 14.5px;
    background: linear-gradient(#ffffff, #e9e8e6);
}

/* workspace */
.workspace {
    flex: 1;
    min-height: 0;
    display: flex;
    border-top: 1px solid #b4b2b0;
}

.toolbox {
    width: 111px;
    flex: none;
    display: flex;
    flex-direction: column;
    gap: 6px;
    font-family: Lato, "Open Sans", sans-serif;
}

.toolbox-head {
    height: 21px;
    display: flex;
    align-items: center;
    justify-content: space-between;
    padding: 0 3px 0 2px;
    font-size: 12px;
}

.toolbox-title {
    flex: 0 0 89px;
    height: 21px;
    line-height: 18px;
    border-bottom: 1px solid #444;
    color: #33363a;
}

.tool-group {
    display: grid;
    grid-template-columns: repeat(3, 30px);
    grid-auto-rows: 32px;
}

.tool-group-first {
    margin-top: -8px;
    margin-bottom: 1px;
}

.tool {
    width: 30px;
    height: 32px;
}

.tool-t {
    font-family: "Liberation Serif", serif;
    font-weight: bold;
    font-size: 24px;
    fill: url(#g-t);
}

.tool-zoom {
    font-family: "Open Sans", sans-serif;
    font-size: 7px;
    fill: #39598a;
}

.tool-active {
    display: flex;
    align-items: center;
    justify-content: center;
    margin-left: 2px;
    width: 27px;
    height: 30px;
    margin-top: 1px;
    border: 1px solid #eeecea;
    border-radius: 4px;
    background-color: #c9c6c3;
}

.splitter {
    width: 5px;
    flex: none;
    display: flex;
    align-items: center;
    justify-content: center;
}

.splitter-right {
    width: 6px;
}

.dots {
    display: block;
    background-image: radial-gradient(circle, #f4f2f0 0.9px, transparent 1.1px);
    background-size: 3px 3px;
}

.dots-v {
    width: 4px;
    height: 14px;
    background-size: 2px 3px;
}

.dots-h {
    width: 23px;
    height: 5px;
}

.center {
    width: 967px;
    flex: none;
    display: flex;
    flex-direction: column;
}

.center-top {
    display: flex;
    height: 590px;
}

.canvas {
    width: 952px;
    height: 590px;
    background-color: #a0a0a4;
}

.assist-line {
    fill: none;
    stroke: #a0a0a0;
    stroke-width: 1.3;
}

.grid-outer {
    fill: none;
    stroke: #7c7c7c;
    stroke-width: 1.5;
}

.grid-inner {
    fill: none;
    stroke: #ffffff;
    stroke-width: 0.6;
}

.assist-ring circle {
    fill: none;
    stroke: #b4b4b4;
    stroke-width: 1.6;
}

.assist-x {
    fill: none;
    stroke: #8c8c8c;
    stroke-width: 1.2;
}

.vscroll {
    width: 15px;
    flex: none;
    display: flex;
    flex-direction: column;
    background-color: #d0cdca;
}

.scroll-btn {
    width: 15px;
    height: 15px;
    flex: none;
    display: flex;
    align-items: center;
    justify-content: center;
    border: 1px solid #a8a6a4;
    border-radius: 3px;
    background: linear-gradient(#ffffff, #e8e7e5);
}

.vscroll-track {
    flex: 1;
    display: flex;
    flex-direction: column;
    padding-top: 181px;
}

.vscroll-thumb {
    height: 207px;
    display: flex;
    align-items: center;
    justify-content: center;
    border: 1px solid #6c93c6;
    background: linear-gradient(90deg, #a8c4ea, #85abdc);
}

.grip-h {
    width: 5px;
    height: 7px;
    border-top: 1px solid #4f78ad;
    border-bottom: 1px solid #4f78ad;
    background: linear-gradient(#4f78ad, #4f78ad) center / 100% 1px no-repeat;
}

.grip-v {
    width: 7px;
    height: 7px;
    border-left: 1px solid #4f78ad;
    border-right: 1px solid #4f78ad;
    background: linear-gradient(#4f78ad, #4f78ad) center / 1px 100% no-repeat;
}

.hscroll {
    width: 952px;
    height: 15px;
    margin-top: 3px;
    display: flex;
    background-color: #d0cdca;
    border-top: 1px solid #a8a6a4;
    border-bottom: 1px solid #a8a6a4;
}

.scroll-btn-h {
    width: 15px;
    height: 13px;
}

.hscroll-track {
    flex: 1;
    padding-left: 303px;
}

.hscroll-thumb {
    width: 329px;
    height: 13px;
    display: flex;
    align-items: center;
    justify-content: center;
    background: linear-gradient(#a8c4ea, #85abdc);
    border-left: 1px solid #6c93c6;
    border-right: 1px solid #6c93c6;
}

/* right hand dockers */
.docks {
    width: 277px;
    flex: none;
    display: flex;
    flex-direction: column;
    font-family: Lato, "Open Sans", sans-serif;
    font-size: 12px;
    letter-spacing: -0.4px;
    color: #2a2a2a;
}

.dock-tabs {
    height: 26px;
    flex: none;
    display: flex;
    align-items: flex-end;
    border-bottom: 1px solid #8e8c8a;
}

.dock-tab {
    height: 23px;
    padding-bottom: 1px;
    display: flex;
    align-items: center;
    justify-content: center;
    border: 1px solid #b0aeac;
    border-bottom: 0;
    border-radius: 3px 3px 0 0;
    background: linear-gradient(#dcd9d7, #d0cdca);
    color: #33363a;
}

.dock-tab.active {
    height: 26px;
    padding-bottom: 3px;
    margin-bottom: -1px;
    border-top: 2px solid #7d9fcf;
    background: linear-gradient(#f4f4f3, #fafafa);
}

.tab-tool {
    width: 78px;
}

.tab-shape {
    width: 69px;
}

.tab-preset {
    width: 85px;
}

.tab-layers {
    width: 48px;
}

.tab-channels {
    width: 61px;
}

.dock-head {
    height: 20px;
    flex: none;
    display: flex;
    align-items: center;
    justify-content: space-between;
    padding: 0 2px;
}

.dock-head-first {
    padding-bottom: 3px;
}

.dock-title {
    color: #33363a;
}

.dock-head-collapsible {
    height: 19px;
    align-items: flex-start;
    justify-content: flex-start;
    gap: 3px;
    padding-left: 1px;
}

.dock-head-layers {
    height: 23px;
    padding-top: 3px;
}

.dock-btn {
    width: 14px;
    height: 14px;
    flex: none;
    border: 1px solid #a09e9c;
    border-radius: 2px;
    background-color: #e6e4e2;
}

.dock-btn svg {
    margin: -1px;
}

.dock-btn-collapse {
    background: linear-gradient(#ffffff, #e4e3e1);
}

.dock-btn-end {
    margin-left: auto;
}

.options-row {
    height: 122px;
    flex: none;
    display: flex;
}

.options-body {
    width: 221px;
    margin-left: 19px;
    padding-top: 19px;
    display: flex;
    flex-direction: column;
    gap: 9px;
}

.combo-small {
    height: 21px;
}

.combo-small span {
    padding-bottom: 2px;
}

.option-buttons {
    display: flex;
    justify-content: space-between;
}

.option-btn {
    height: 31px;
    width: 107px;
    flex: none;
    display: flex;
    align-items: center;
    justify-content: center;
    gap: 3px;
    border: 1px solid #a8a6a4;
    border-radius: 4px;
    background: linear-gradient(#ffffff, #e9e8e6);
    color: #1c1c1c;
}

.option-btn span {
    padding-bottom: 2px;
}

.option-delete {
    width: 221px;
}

.mini-scroll {
    width: 14px;
    margin-left: 23px;
    flex: none;
    display: flex;
    flex-direction: column;
}

.mini-scroll .scroll-btn {
    width: 14px;
    height: 14px;
}

.mini-track {
    flex: 1;
    background-color: #cfccc9;
}

.mini-thumb {
    height: 80px;
    display: flex;
    align-items: center;
    justify-content: center;
    background: linear-gradient(90deg, #a8c4ea, #85abdc);
    border: 1px solid #6c93c6;
}

.dock-split {
    height: 8px;
    flex: none;
    display: flex;
    align-items: center;
    justify-content: center;
    padding-right: 8px;
}

.selector {
    width: 259px;
    height: 103px;
    margin-left: 1px;
    flex: none;
    display: flex;
    flex-direction: column;
    background-color: #808080;
}

.selector-top {
    height: 68px;
    flex: none;
    display: flex;
}

.selector-settings {
    width: 30px;
    height: 30px;
    margin: 1px 0 0 1px;
    display: flex;
    align-items: center;
    justify-content: center;
    border: 1px solid #c0bebc;
    border-radius: 4px;
    background: linear-gradient(#fafafa, #e4e3e1);
}

.color-wheel {
    width: 64px;
    height: 64px;
    margin: 1px 0 0 66px;
    border-radius: 50%;
    background:
        radial-gradient(circle, #808080 0 25.5px, transparent 26px),
        conic-gradient(#a8ff00, #00ff50 45deg, #00ffff 90deg, #0040ff 135deg, #a000ff 180deg, #ff00c0 225deg, #ff0030 270deg, #ffb000 315deg, #a8ff00);
}

.strip {
    height: 10px;
    flex: none;
    margin-bottom: 1px;
}

.strip-1 {
    background: linear-gradient(90deg, #009a60, #00938a 45%, #005a96 75%, #00208e);
}

.strip-2 {
    background: linear-gradient(90deg, #0e1a20, #008eb0 55%, #00d8ff 90%);
}

.strip-3 {
    background: linear-gradient(90deg, #00141a, #00708c 45%, #80ecff);
}

.selector-refresh {
    height: 16px;
    margin-left: 1px;
    flex: none;
}

.dock-split-low {
    height: 7px;
}

.dock-tabs-low {
    height: 25px;
}

.layer-mode {
    height: 24px;
    margin-left: 2px;
    flex: none;
    display: flex;
    align-items: center;
    gap: 8px;
}

.combo-layer {
    width: 245px;
    height: 24px;
}

.combo-layer span {
    padding-bottom: 3px;
}

.layer-opacity {
    height: 15px;
    margin: 7px 2px 0 1px;
    flex: none;
    display: flex;
    align-items: center;
    gap: 1px;
}

.layer-opacity .spin-slider {
    flex: none;
    width: 263px;
    height: 15px;
    font-size: 12px;
    background:
        repeating-linear-gradient(135deg, transparent 0 8px, rgba(255, 255, 255, 0.14) 8px 16px),
        linear-gradient(#a6c3ea, #7fa3d3);
}

.layer-list {
    height: 151px;
    margin: 6px 2px 0 1px;
    flex: none;
    border: 1px solid #a8a6a4;
    background-color: #fff;
}

.layer-row {
    height: 33px;
    display: flex;
    background: linear-gradient(#7fa6d8, #5f8bc4);
}

.layer-color {
    width: 20px;
    background-color: #92c8f0;
}

.layer-thumb {
    width: 33px;
    height: 18px;
    margin-top: 7px;
    background-color: #fff;
}

.layer-info {
    display: flex;
    flex-direction: column;
    padding-left: 1px;
}

.layer-name {
    height: 15px;
    line-height: 13px;
    color: #f0f5fb;
    font-size: 12px;
}

.layer-flags {
    display: flex;
    align-items: center;
    height: 16px;
}

.flag-lock {
    margin: 0 2px 0 3px;
}

.layer-footer {
    height: 36px;
    flex: none;
    display: grid;
    grid-template-columns: 16px 22px 38px 30px 38px 30px 38px 28px 31px;
    align-items: center;
    padding: 6px 0 0 1px;
}

.layer-tool {
    justify-self: center;
}

.layer-minus {
    justify-self: end;
}

/* status bar */
.statusbar {
    height: 38px;
    flex: none;
    display: grid;
    grid-template-columns: 331px 707px 173px 48px 79px 28px;
    align-items: center;
    background-color: #edecea;
    border-top: 2px solid #fafafa;
    border-bottom: 1px solid #bcbab8;
    font-size: 14.4px;
    color: #33363a;
}

.statusbar span {
    margin-top: -2px;
}

.status-sel {
    margin-left: 2px;
}

.zoom-slider {
    width: 74px;
    height: 16px;
    display: flex;
    align-items: center;
}

.zoom-fill {
    width: 24px;
    height: 5px;
    border: 1px solid #7392bd;
    background-color: #88aedd;
}

.zoom-handle {
    width: 20px;
    height: 13px;
    display: flex;
    align-items: center;
    justify-content: center;
    border: 1px solid #a8a6a4;
    border-radius: 3px;
    background: linear-gradient(#ffffff, #e4e3e1);
}

.zoom-rest {
    flex: 1;
    height: 5px;
    border: 1px solid #a8a6a4;
    background-color: #dddbd9;
}

.status-btn {
    width: 28px;
    height: 30px;
    display: flex;
    align-items: center;
    justify-content: center;
    border: 1px solid #a8a6a4;
    border-radius: 3px;
    background-color: #cfccc9;
}

.pointer {
    position: absolute;
    left: 695px;
    top: 694px;
    width: 24px;
    height: 24px;
    padding: 4px 6px;
    background-color: #000;
}
```

FILE: grid.js
```js
// perspective assistant grids, each quad is TL, TR, BR, BL in canvas coordinates
var quads = [
    [[499, 417], [560, 417], [898, 677], [258, 676]],
    [[214, 300], [284, 276], [287, 598], [214, 676]],
    [[298, 362], [367, 329], [372, 526], [302, 598]],
    [[287, 598], [325, 598], [253, 676], [214, 676]],
    [[499, 349], [560, 349], [560, 415], [499, 415]]
];

function mapper(p) {
    var dx1 = p[1][0] - p[2][0], dx2 = p[3][0] - p[2][0], sx = p[0][0] - p[1][0] + p[2][0] - p[3][0];
    var dy1 = p[1][1] - p[2][1], dy2 = p[3][1] - p[2][1], sy = p[0][1] - p[1][1] + p[2][1] - p[3][1];
    var det = dx1 * dy2 - dx2 * dy1;
    var g = (sx * dy2 - dx2 * sy) / det;
    var h = (dx1 * sy - sx * dy1) / det;
    return function (u, v) {
        var w = g * u + h * v + 1;
        var x = (p[1][0] - p[0][0] + g * p[1][0]) * u + (p[3][0] - p[0][0] + h * p[3][0]) * v + p[0][0];
        var y = (p[1][1] - p[0][1] + g * p[1][1]) * u + (p[3][1] - p[0][1] + h * p[3][1]) * v + p[0][1];
        return (x / w).toFixed(1) + ' ' + (y / w).toFixed(1);
    };
}

var holder = document.getElementById('grids');
quads.forEach(function (q) {
    var at = mapper(q), d = '';
    for (var i = 0; i <= 8; i++) {
        d += 'M' + at(i / 8, 0) + 'L' + at(i / 8, 1);
        d += 'M' + at(0, i / 8) + 'L' + at(1, i / 8);
    }
    ['grid-outer', 'grid-inner'].forEach(function (cls) {
        var path = document.createElementNS('http://www.w3.org/2000/svg', 'path');
        path.setAttribute('d', d);
        path.setAttribute('class', cls);
        holder.appendChild(path);
    });
});
```
